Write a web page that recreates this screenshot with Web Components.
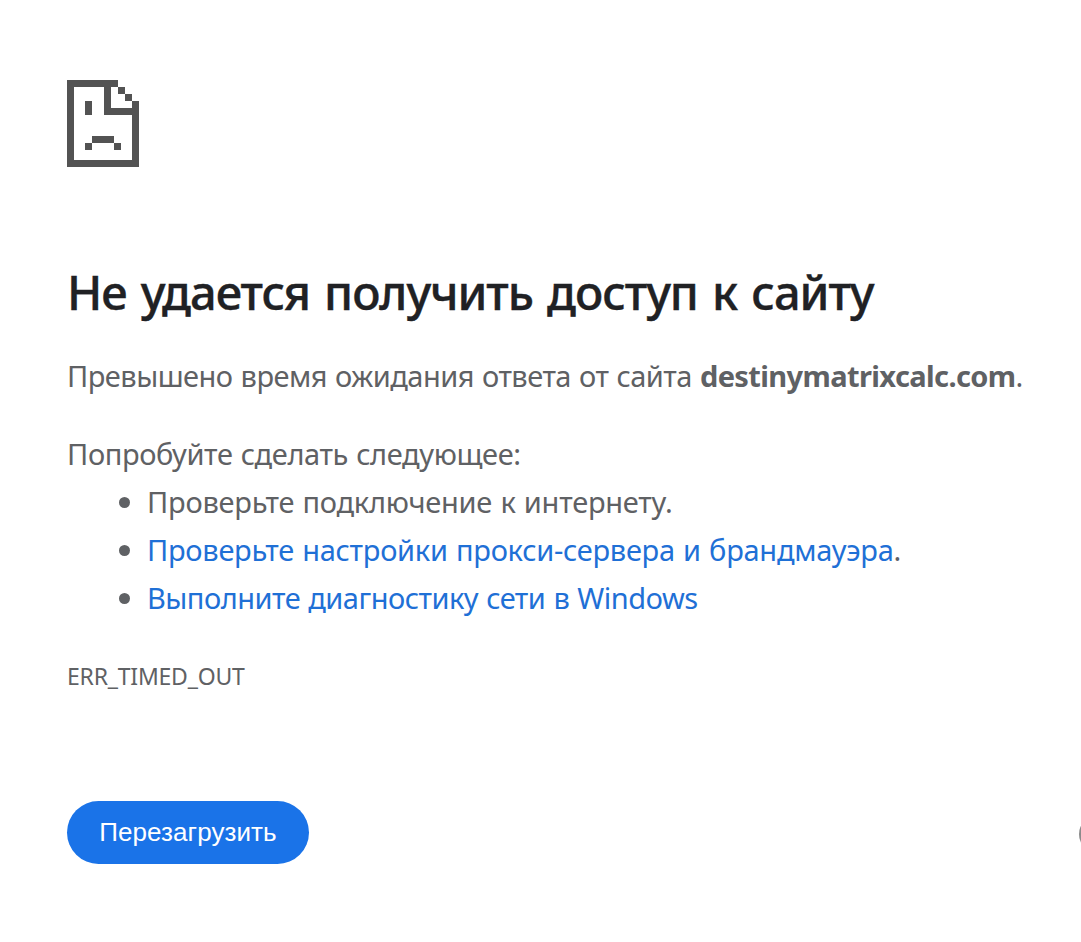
<!DOCTYPE html>
<html lang="ru"><head><meta charset="utf-8"><title>destinymatrixcalc.com</title>
<style>body{margin:0;background:#fff;color:#5f6164;font-family:"Noto Sans","Open Sans",sans-serif;overflow:hidden}</style></head><body>
<error-page></error-page>
<script>
const define=(name,html)=>customElements.define(name,class extends HTMLElement{
  constructor(){super();this.attachShadow({mode:'open'}).innerHTML=html}
});
define('sad-page-icon',`<style>:host{display:block;width:72px;height:87px}svg{display:block}</style>
<svg width="72" height="87" viewBox="0 0 72 87" fill="#535353" shape-rendering="crispEdges"><path d="M0 0H51V7H44V28H65V21H72V87H0ZM7 7V80H65V35H37V7Z" fill-rule="evenodd"/><path d="M51 7h7v7h-7zM58 14h7v7h-7zM18 21h7v14h-7zM25 56h22v7H25zM18 63h7v7h-7zM47 63h7v7h-7z"/></svg>`);
define('error-title',`<style>:host{display:block;margin-top:96px;margin-bottom:31px}h1{margin:0;font-size:47px;line-height:58px;font-weight:550;letter-spacing:-1.05px;word-spacing:3px;-webkit-text-stroke:.4px #202124;color:#202124;white-space:nowrap}</style><h1><slot></slot></h1>`);
define('text-line',`<style>:host{display:block;margin-top:30px;font-size:29px;line-height:48px;word-spacing:1px;white-space:nowrap}</style><slot></slot>`);
define('suggestion-item',`<style>:host{display:flex;align-items:center;height:48px;font-size:29px;line-height:48px;word-spacing:1px;white-space:nowrap;padding-left:52px}i{width:11px;height:11px;border-radius:50%;background:#5f6164;margin-right:17px}::slotted(a){color:#1f70d6;text-decoration:none}</style><i></i><div><slot></slot></div>`);
define('error-code',`<style>:host{display:block;margin-top:41px;font-size:23px;line-height:26px;letter-spacing:-.22px}</style><slot></slot>`);
define('reload-button',`<style>:host{display:block;margin-top:112px}button{display:block;width:242px;height:63px;border:0;padding:0;border-radius:32px;background:#1a73e8;color:#fff;font:26px "Liberation Sans",Arial,sans-serif;letter-spacing:.08px}</style><button><slot></slot></button>`);
define('edge-handle',`<style>:host{position:absolute;left:1079px;top:816px;width:36px;height:36px;box-sizing:border-box;border-radius:50%;background:#8b8b8b}</style>`);
define('error-page',`<style>:host{display:block;position:relative;box-sizing:border-box;width:1081px;height:942px;overflow:hidden;padding:80px 0 0 67px}b{font-weight:700;letter-spacing:-.61px}.reason{letter-spacing:-.51px}.intro{letter-spacing:-.38px}.connection{letter-spacing:-.24px}.proxy{letter-spacing:-.27px}.diagnostics{letter-spacing:-.5px}</style>
<sad-page-icon></sad-page-icon>
<error-title>Не удается получить доступ к сайту</error-title>
<text-line class="reason">Превышено время ожидания ответа от сайта <b>destinymatrixcalc.com</b>.</text-line>
<text-line class="intro">Попробуйте сделать следующее:</text-line>
<suggestion-item class="connection">Проверьте подключение к интернету.</suggestion-item>
<suggestion-item class="proxy"><a href="#">Проверьте настройки прокси-сервера и брандмауэра</a>.</suggestion-item>
<suggestion-item class="diagnostics"><a href="#">Выполните диагностику сети в Windows</a></suggestion-item>
<error-code>ERR_TIMED_OUT</error-code>
<reload-button>Перезагрузить</reload-button>
<edge-handle></edge-handle>`);
</script></body></html>
